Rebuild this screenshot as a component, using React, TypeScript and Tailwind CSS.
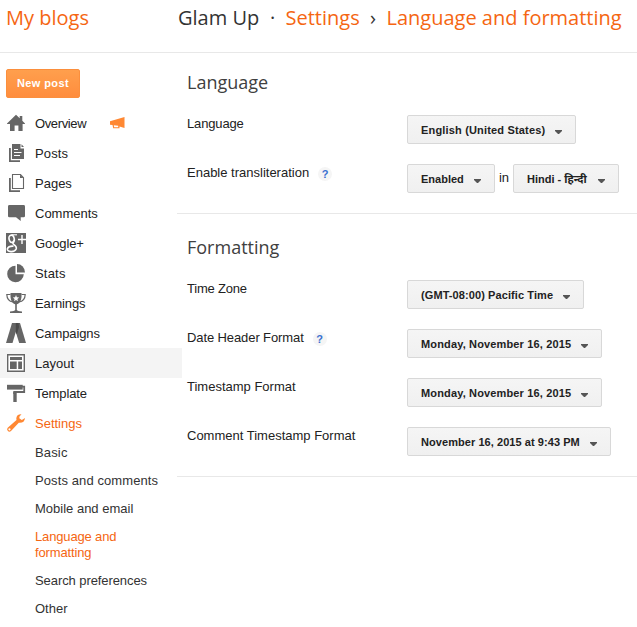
import type { ReactNode } from "react";

const grey = "#666666";

function Icon({ children }: { children: ReactNode }) {
  return (
    <svg className="block h-[20px] w-[20px] shrink-0" viewBox="0 0 20 20" fill={grey}>
      {children}
    </svg>
  );
}

const HomeIcon = () => (
  <Icon>
    <path d="M10 1.8 L13.7 5.3 V3 H16.3 V7.8 L19 10.5 V11 H16.6 V18 H12.4 V12.5 H8.6 V18 H4 V11 H1 V10.5 Z" />
  </Icon>
);
const PostsIcon = () => (
  <Icon>
    <path d="M3 5 H4.8 V17.2 H14 V19 H3 Z" />
    <path d="M6 1 H14.5 V5.5 H18 V16 H6 Z" />
    <path d="M15.5 1.2 L18 4 H15.5 Z" />
    <path d="M8 6.5 H12 M8 9.5 H15.5 M8 12.5 H14" stroke="#fff" strokeWidth="1" />
  </Icon>
);
const PagesIcon = () => (
  <Icon>
    <path d="M3 5 H4.8 V17.2 H14 V19 H3 Z" />
    <path d="M6.5 1.5 H14.5 L17.5 4.8 V15.5 H6.5 Z" fill="#fff" stroke={grey} strokeWidth="1.1" />
    <path d="M14 1.5 V5 H17.5 Z" />
  </Icon>
);
const CommentIcon = () => (
  <Icon>
    <path d="M3.4 2 H17.6 Q19 2 19 3.4 V12.9 Q19 14.3 17.6 14.3 H14.7 V18 L10 14.3 H3.4 Q2 14.3 2 12.9 V3.4 Q2 2 3.4 2 Z" />
  </Icon>
);
const GooglePlusIcon = () => (
  <Icon>
    <path d="M0 0 H20 V20 H0 Z" />
    <g fill="none" stroke="#fff">
      <ellipse cx="5.6" cy="5.8" rx="2.6" ry="3.7" strokeWidth="1.6" transform="rotate(-14 5.6 5.8)" />
      <path d="M5.5 1.8 H11" strokeWidth="1.1" />
      <path d="M8 8.8 Q5.8 10.2 8 11.6 Q11 13.6 10.2 16 Q9 18.8 5 18.6 Q.8 18 1.4 15.6 Q2.6 12.8 7.5 13.2" strokeWidth="1.6" />
      <path d="M16 2 V11 M12 6.5 H20" strokeWidth="1.4" />
    </g>
  </Icon>
);
const StatsIcon = () => (
  <Icon>
    <path d="M9.5 2.7 A8.3 8.3 0 1 0 17.8 11.3 H9.5 Z" />
    <path d="M11 1 A8 8.4 0 0 1 19 9.5 H11 Z" />
  </Icon>
);
const TrophyIcon = () => (
  <Icon>
    <path d="M4.5 0 H15.5 V4 Q15 10.5 10 11.5 Q5 10.5 4.5 4 Z" />
    <path d="M4.5 1.5 H.8 Q1 8 7 9 M15.5 1.5 H19.2 Q19 8 13 9" fill="none" stroke={grey} strokeWidth="1.2" />
    <path d="M9.2 10 H10.8 V17 Q11.5 18 16 18.5 V20 H4 V18.5 Q8.5 18 9.2 17 Z" />
    <path d="M10 2 L10.9 4.3 L13.2 4.4 L11.4 5.9 L12 8.2 L10 6.9 L8 8.2 L8.6 5.9 L6.8 4.4 L9.1 4.3 Z" fill="#fff" />
  </Icon>
);
const CampaignsIcon = () => (
  <Icon>
    <path d="M6 0 H12.5 L6.5 20 H0 Z" />
    <path d="M8 0 H14 L20 20 H13.2 L9.8 9 Z" />
    <path d="M9.8 0 H12.5 L13 4 L10.8 11.5 L9.8 9 Z" fill="#4a4a4a" />
  </Icon>
);
const LayoutIcon = () => (
  <Icon>
    <path d="M1.7 1.7 H18.3 V18.3 H1.7 Z" fill="#fff" stroke={grey} strokeWidth="1.4" />
    <path d="M4 4 H16 V7 H4 Z M4 8.4 H10.7 V16 H4 Z M12.2 8.4 H16 V16 H12.2 Z" />
  </Icon>
);
const TemplateIcon = () => (
  <Icon>
    <path d="M1 1.8 H16.7 V6.6 H1 Z" />
    <path d="M16 3.6 H18.2 V9 H8.2 V11" fill="none" stroke={grey} strokeWidth="1.8" />
    <path d="M7.3 9 H10.7 V19 H7.3 Z" />
  </Icon>
);
const WrenchIcon = () => (
  <Icon>
    <path
      d="M15.5 1.2 Q10.5 1 10.3 5.5 L10.5 7 L1.7 14.8 Q.4 16.2 1.7 17.8 Q3.3 19.5 5 18 L12.8 9.8 Q18.5 10.3 19 5 L15.8 7 L13.3 5.2 L13.5 3.5 Z M3.5 15.2 A1.1 1.1 0 1 1 3.49 15.2 Z"
      fill="#ff8833"
      fillRule="evenodd"
    />
  </Icon>
);
const Megaphone = () => (
  <svg className="block h-[12px] w-[15px]" viewBox="0 0 15 12" fill="#ff8833">
    <path d="M0 4.2 L14.5 0 V11 L9.5 9.6 V11.3 H3.2 L2.5 8 L0 7.7 Z M3.8 8.2 L4.2 10.2 H8.2 V8.7 Z" fillRule="evenodd" />
  </svg>
);

const nav = [
  { icon: <HomeIcon />, label: "Overview", track: "tracking-[-0.38px]" },
  { icon: <PostsIcon />, label: "Posts", track: "tracking-[0.15px]" },
  { icon: <PagesIcon />, label: "Pages", track: "" },
  { icon: <CommentIcon />, label: "Comments", track: "" },
  { icon: <GooglePlusIcon />, label: "Google+", track: "tracking-[-0.1px]" },
  { icon: <StatsIcon />, label: "Stats", track: "tracking-[0.2px]" },
  { icon: <TrophyIcon />, label: "Earnings", track: "tracking-[-0.1px]" },
  { icon: <CampaignsIcon />, label: "Campaigns", track: "tracking-[-0.1px]" },
  { icon: <LayoutIcon />, label: "Layout", track: "" },
  { icon: <TemplateIcon />, label: "Template", track: "tracking-[-0.1px]" },
  { icon: <WrenchIcon />, label: "Settings", track: "" },
];

const subNav = [
  { label: "Basic", style: "tracking-[0.15px]" },
  { label: "Posts and comments", style: "tracking-[0.1px]" },
  { label: "Mobile and email", style: "" },
  { label: "Language and formatting", style: "w-[100px] tracking-[-0.15px] text-[#f56612]" },
  { label: "Search preferences", style: "tracking-[-0.08px]" },
  { label: "Other", style: "" },
];

function Select({ children, style }: { children: ReactNode; style: string }) {
  return (
    <button
      className={`flex h-[29px] items-center justify-between rounded-[2px] border border-[#d8d8d8] bg-linear-to-b from-[#f5f5f5] to-[#f0f0f0] pr-[13px] pl-[13px] text-[11px] font-bold whitespace-nowrap text-[#222] ${style}`}
    >
      <span className="pt-[2px]">{children}</span>
      <svg className="mt-[4px] h-[4px] w-[7px]" viewBox="0 0 7 4" fill="#555">
        <path d="M0 0 H7 V1 L4 4 H3 L0 1 Z" />
      </svg>
    </button>
  );
}

function Row({ label, help, track = "", children }: { label: string; help?: boolean; track?: string; children: ReactNode }) {
  return (
    <div className="flex h-[49px] items-start">
      <div className="flex w-[220px] shrink-0 items-center text-[13px] leading-[18px] whitespace-nowrap text-[#222]">
        <span className={track}>{label}</span>
        {help && (
          <span className="mt-px ml-[9px] flex h-[14px] w-[14px] items-center justify-center rounded-full bg-[#f5f5f5] text-[11px] leading-[14px] font-bold text-[#3a70d0]">
            ?
          </span>
        )}
      </div>
      {children}
    </div>
  );
}

const heading = "pl-[10px] font-['Open_Sans',sans-serif] text-[18px] leading-[24px] text-[#404040]";

export default function App() {
  return (
    <div className="h-[627px] w-[637px] overflow-hidden bg-white font-['Liberation_Sans','Noto_Sans',Arial,sans-serif] text-[13px] text-[#222]">
      <header className="flex h-[53px] border-b border-[#e8e8e8] pt-[4px] font-['Open_Sans',sans-serif] text-[20px] leading-[28px] whitespace-nowrap text-[#f56612]">
        <div className="w-[178px] shrink-0 pl-[6px]">My blogs</div>
        <span className="w-[92px] text-[#333]">Glam Up</span>
        <span className="w-[15.5px] text-[#333]">·</span>
        <span className="w-[84.5px]">Settings</span>
        <span className="w-[16.5px] text-[#333]">›</span>
        <span>Language and formatting</span>
      </header>
      <div className="flex">
        <aside className="w-[177px] shrink-0 pt-[16px]">
          <button className="mb-[10px] ml-[6px] block h-[29px] w-[74px] rounded-[2px] border border-[#fb8f3d] bg-linear-to-b from-[#ff9f4d] to-[#ff8d3d] text-[11px] font-bold tracking-[0.4px] whitespace-nowrap text-white">
            New post
          </button>
          <nav>
            {nav.map((item) => (
              <div
                key={item.label}
                className={`flex h-[30px] w-[182px] items-center pl-[6px] ${item.label === "Layout" ? "bg-[#f4f4f4]" : ""} ${item.label === "Settings" ? "text-[#f56612]" : ""}`}
              >
                {item.icon}
                <span className={`ml-[9px] pt-[2px] ${item.label === "Overview" ? "w-[75px]" : ""} ${item.track}`}>{item.label}</span>
                {item.label === "Overview" && <Megaphone />}
              </div>
            ))}
          </nav>
          <ul className="pt-px pl-[35px] leading-[16px] whitespace-nowrap text-[#333]">
            {subNav.map((item) => (
              <li key={item.label} className={`py-[6px] ${item.label.startsWith("Language") ? "whitespace-normal" : ""} ${item.style}`}>
                {item.label}
              </li>
            ))}
          </ul>
        </aside>
        <main className="flex-1">
          <section className="h-[161px] border-b border-[#e8e8e8] pt-[17px]">
            <h2 className={heading}>Language</h2>
            <div className="pt-[21px] pl-[10px]">
              <Row label="Language" track="tracking-[-0.15px]">
                <Select style="w-[169px] tracking-[0.17px]">English (United States)</Select>
              </Row>
              <Row label="Enable transliteration" help>
                <Select style="w-[88px]">Enabled</Select>
                <span className="w-[18px] pt-[4px] text-center">in</span>
                <Select style="w-[106px]">Hindi - हिन्दी</Select>
              </Row>
            </div>
          </section>
          <section className="h-[263px] border-b border-[#e8e8e8] pt-[21px]">
            <h2 className={heading}>Formatting</h2>
            <div className="pt-[21px] pl-[10px]">
              <Row label="Time Zone" track="tracking-[-0.2px]">
                <Select style="w-[177px] tracking-[0.09px]">(GMT-08:00) Pacific Time</Select>
              </Row>
              <Row label="Date Header Format" help track="tracking-[-0.1px]">
                <Select style="w-[195px] tracking-[0.15px]">Monday, November 16, 2015</Select>
              </Row>
              <Row label="Timestamp Format">
                <Select style="w-[195px] tracking-[0.15px]">Monday, November 16, 2015</Select>
              </Row>
              <Row label="Comment Timestamp Format">
                <Select style="w-[204px] tracking-[0.06px]">November 16, 2015 at 9:43 PM</Select>
              </Row>
            </div>
          </section>
        </main>
      </div>
    </div>
  );
}
